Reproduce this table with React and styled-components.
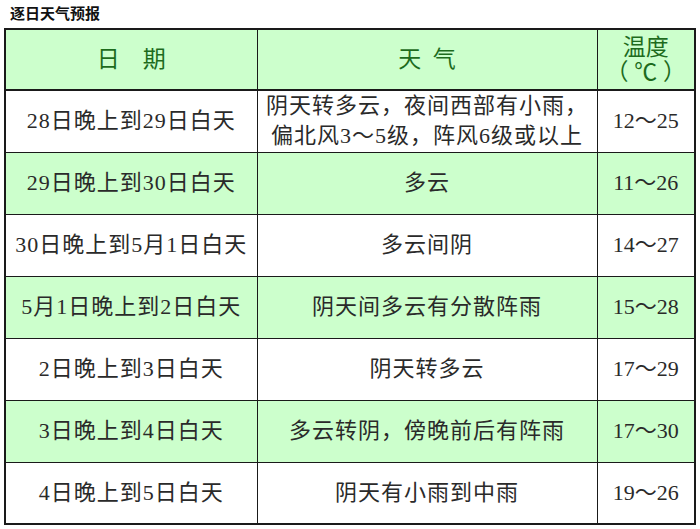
import React from "react";
import styled, { createGlobalStyle } from "styled-components";

const GlobalStyle = createGlobalStyle`
  body {
    margin: 0;
    background: #ffffff;
    font-family: "Liberation Serif", "Noto Sans CJK SC", serif;
  }
`;

const colors = {
  green: "#ccffcc",
  headText: "#1d6b1d",
  text: "#2a2a2a",
  border: "#1a1a1a",
};

const Page = styled.div`
  width: 700px;
  height: 529px;
  padding: 4px 0 0 4px;
  box-sizing: border-box;
`;

const Title = styled.div`
  padding-left: 6px;
  height: 24px;
  font-family: "Noto Sans CJK SC", sans-serif;
  font-size: 15px;
  font-weight: 700;
  line-height: 18px;
  color: #111;
`;

const Table = styled.table`
  width: 692px;
  border-collapse: collapse;
  table-layout: fixed;
  border: 2px solid ${colors.border};
`;

const Row = styled.tr`
  height: 62px;
  background: ${({ $green }) => ($green ? colors.green : "#ffffff")};
`;

const HeadRow = styled.tr`
  height: 61px;
  background: ${colors.green};
  border-bottom: 2px solid ${colors.border};
`;

const HeadCell = styled.th`
  border: 1px solid ${colors.border};
  padding: 0;
  font-family: "Liberation Serif", "Noto Sans CJK SC", serif;
  font-size: 23px;
  font-weight: 400;
  line-height: 25px;
  color: ${colors.headText};
  text-align: center;
  white-space: pre;
`;

const Cell = styled.td`
  border: 1px solid ${colors.border};
  padding: 0;
  font-family: "Liberation Serif", "Noto Sans CJK SC", serif;
  font-size: 22px;
  line-height: 30px;
  letter-spacing: ${({ $spacing }) => $spacing || "1px"};
  color: ${colors.text};
  text-align: center;
`;

const forecast = [
  {
    date: "28日晚上到29日白天",
    weather: ["阴天转多云，夜间西部有小雨，", "偏北风3～5级，阵风6级或以上"],
    temp: "12～25",
  },
  { date: "29日晚上到30日白天", weather: ["多云"], temp: "11～26" },
  { date: "30日晚上到5月1日白天", weather: ["多云间阴"], temp: "14～27" },
  { date: "5月1日晚上到2日白天", weather: ["阴天间多云有分散阵雨"], temp: "15～28" },
  { date: "2日晚上到3日白天", weather: ["阴天转多云"], temp: "17～29" },
  { date: "3日晚上到4日白天", weather: ["多云转阴，傍晚前后有阵雨"], temp: "17～30" },
  { date: "4日晚上到5日白天", weather: ["阴天有小雨到中雨"], temp: "19～26" },
];

const App = () => {
  return (
    <Page>
      <GlobalStyle />
      <Title>逐日天气预报</Title>
      <Table>
        <colgroup>
          <col style={{ width: 252 }} />
          <col style={{ width: 340 }} />
          <col style={{ width: 98 }} />
        </colgroup>
        <thead>
          <HeadRow>
            <HeadCell>{"日    期"}</HeadCell>
            <HeadCell>{"天  气"}</HeadCell>
            <HeadCell>
              温度
              <br />
              {"（ ℃ ）"}
            </HeadCell>
          </HeadRow>
        </thead>
        <tbody>
          {forecast.map((item, i) => (
            <Row key={item.date} $green={i % 2 === 1}>
              <Cell>{item.date}</Cell>
              <Cell>
                {item.weather.map((line) => (
                  <div key={line}>{line}</div>
                ))}
              </Cell>
              <Cell $spacing="0">{item.temp}</Cell>
            </Row>
          ))}
        </tbody>
      </Table>
    </Page>
  );
};

export default App;
